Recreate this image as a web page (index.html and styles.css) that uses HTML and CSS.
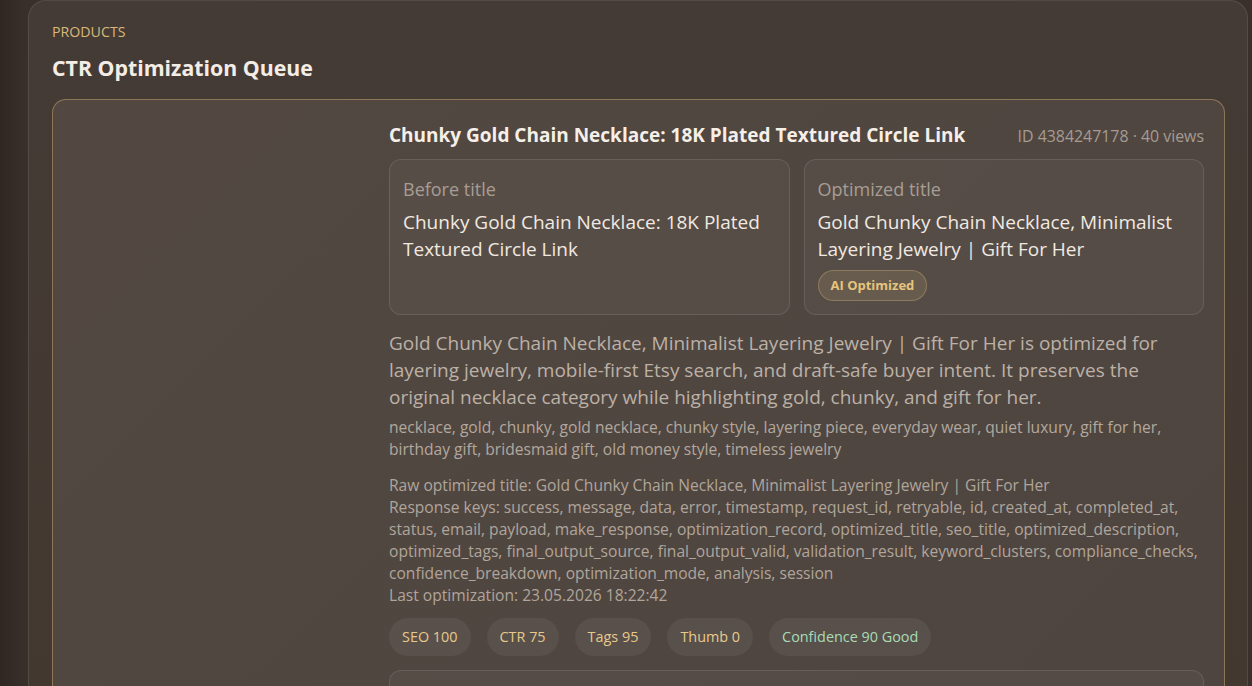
FILE: index.html
```html
<!DOCTYPE html>
<html lang="en">
<head>
<meta charset="utf-8">
<title>CTR Optimization Queue</title>
<link rel="stylesheet" href="styles.css">
</head>
<body>
<main class="page">
  <section class="panel">
    <div class="eyebrow">PRODUCTS</div>
    <h1 class="panel-title">CTR Optimization Queue</h1>

    <article class="product">
      <div class="thumb"></div>
      <div class="product-body">
        <header class="product-head">
          <h2 class="product-name">Chunky Gold Chain Necklace: 18K Plated Textured Circle Link</h2>
          <span class="product-meta">ID 4384247178 · 40 views</span>
        </header>

        <div class="compare">
          <div class="compare-box">
            <div class="compare-label">Before title</div>
            <div class="compare-text">Chunky Gold Chain Necklace: 18K Plated Textured Circle Link</div>
          </div>
          <div class="compare-box">
            <div class="compare-label">Optimized title</div>
            <div class="compare-text">Gold Chunky Chain Necklace, Minimalist Layering Jewelry | Gift For Her</div>
            <span class="ai-badge">AI Optimized</span>
          </div>
        </div>

        <p class="description">Gold Chunky Chain Necklace, Minimalist Layering Jewelry | Gift For Her is optimized for layering jewelry, mobile-first Etsy search, and draft-safe buyer intent. It preserves the original necklace category while highlighting gold, chunky, and gift for her.</p>
        <p class="tags">necklace, gold, chunky, gold necklace, chunky style, layering piece, everyday wear, quiet luxury, gift for her, birthday gift, bridesmaid gift, old money style, timeless jewelry</p>

        <div class="debug">
          <div>Raw optimized title: Gold Chunky Chain Necklace, Minimalist Layering Jewelry | Gift For Her</div>
          <div>Response keys: success, message, data, error, timestamp, request_id, retryable, id, created_at, completed_at, status, email, payload, make_response, optimization_record, optimized_title, seo_title, optimized_description, optimized_tags, final_output_source, final_output_valid, validation_result, keyword_clusters, compliance_checks, confidence_breakdown, optimization_mode, analysis, session</div>
          <div>Last optimization: 23.05.2026 18:22:42</div>
        </div>

        <div class="scores">
          <span class="score">SEO 100</span>
          <span class="score">CTR 75</span>
          <span class="score">Tags 95</span>
          <span class="score">Thumb 0</span>
          <span class="score score-good">Confidence 90 Good</span>
        </div>

        <div class="next-box"></div>
      </div>
    </article>
  </section>
</main>
</body>
</html>
```

FILE: styles.css
```css
* { box-sizing: border-box; }

html, body {
  margin: 0;
  height: 100%;
  overflow: hidden;
}

body {
  background: linear-gradient(90deg, #2f2723 0px, #3a302b 28px, #3a302b 100%);
  font-family: "Segoe UI", "Open Sans", "Noto Sans", sans-serif;
  color: #ece4dc;
}

.page {
  padding: 0 4px 0 28px;
}

.panel {
  background: linear-gradient(180deg, #453b36 0%, #42382f 100%);
  border: 1px solid rgba(255, 255, 255, 0.09);
  border-bottom: none;
  border-radius: 18px 18px 0 0;
  padding: 21px 22px 0 23px;
  min-height: 700px;
}

.eyebrow {
  color: #d8b879;
  font-size: 14.2px;
  line-height: 20px;
}

.panel-title {
  margin: 11px 0 0;
  font-size: 21.3px;
  font-weight: 700;
  line-height: 30px;
  color: #f4ede6;
}

.product {
  margin-top: 16px;
  display: grid;
  grid-template-columns: 296px 1fr;
  gap: 20px;
  padding: 21px 20px 0;
  border: 1px solid #8d7657;
  border-bottom: none;
  border-radius: 14px 14px 0 0;
  background: linear-gradient(135deg, #524841 0%, #4e4540 100%);
  min-height: 600px;
}

.thumb {
  min-height: 100%;
}

.product-head {
  display: flex;
  justify-content: space-between;
  align-items: baseline;
  gap: 16px;
  height: 30px;
}

.product-name {
  margin: 0;
  font-size: 19px;
  font-weight: 700;
  line-height: 28px;
  color: #f6efe8;
}

.product-meta {
  font-size: 15.9px;
  color: #a69b92;
  white-space: nowrap;
}

.compare {
  margin-top: 8px;
  display: grid;
  grid-template-columns: 1fr 1fr;
  gap: 14px;
}

.compare-box {
  min-height: 156px;
  padding: 16px 13px 13px 13px;
  border: 1px solid rgba(255, 255, 255, 0.1);
  border-radius: 12px;
  background: rgba(255, 255, 255, 0.035);
}

.compare-label {
  font-size: 18px;
  line-height: 26px;
  color: #a89d94;
}

.compare-text {
  margin-top: 7px;
  font-size: 19px;
  line-height: 27px;
  color: #f1e9e1;
}

.ai-badge {
  display: inline-block;
  margin-top: 7px;
  padding: 0 12px;
  height: 31px;
  line-height: 29px;
  border: 1px solid rgba(216, 184, 121, 0.35);
  border-radius: 16px;
  background: rgba(216, 184, 121, 0.14);
  color: #e6c47d;
  font-size: 13px;
  font-weight: 700;
}

.description {
  margin: 15px 0 0;
  font-size: 19px;
  line-height: 27px;
  color: #bcb1a7;
}

.tags {
  margin: 5px 0 0;
  font-size: 15.6px;
  line-height: 22px;
  color: #b3a89e;
}

.debug {
  margin-top: 14px;
  font-size: 15.6px;
  line-height: 22px;
  color: #b0a59b;
}

.scores {
  margin-top: 12px;
  display: flex;
  flex-wrap: wrap;
  gap: 16px;
}

.score {
  height: 38px;
  line-height: 38px;
  padding: 0 13px;
  border-radius: 19px;
  background: rgba(255, 255, 255, 0.055);
  color: #e8c98b;
  font-size: 14.4px;
}

.score-good {
  color: #a9dcb6;
}

.next-box {
  margin-top: 14px;
  height: 60px;
  border: 1px solid rgba(255, 255, 255, 0.1);
  border-radius: 12px;
  background: rgba(255, 255, 255, 0.035);
}
```
